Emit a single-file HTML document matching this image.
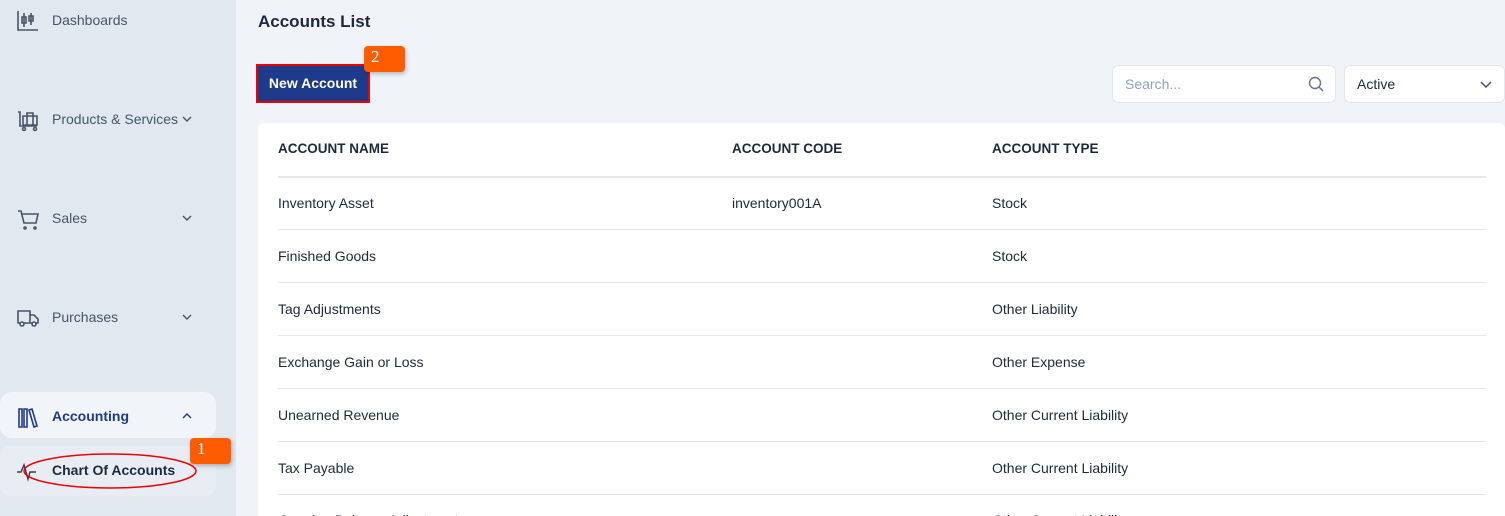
<!DOCTYPE html><html><head><style>
*{margin:0;padding:0;box-sizing:border-box}
html{overflow:hidden;width:1505px;height:516px}
body{width:1505px;height:516px;overflow:hidden;background:#f0f3f8;font-family:"Liberation Sans",sans-serif;position:relative;color:#1e293b}
.sb{position:absolute;left:0;top:0;width:236px;height:516px;background:#e2e8f0}
.it{position:absolute;left:0;width:216px;height:46px;font-size:14px;color:#475569}
.it svg.ic{position:absolute;left:17px;top:13px}
.it .t{position:absolute;left:52px;top:14px}
.it svg.chev{position:absolute;left:182px;top:19px}
.abs{position:absolute}
.th{position:absolute;top:141px;font-size:13.5px;font-weight:bold;color:#1e293b}
.td{position:absolute;font-size:14px;color:#1e293b}
.ln{position:absolute;left:278px;width:1208px;height:1px;background:#e5e7eb}
.badge{position:absolute;background:#ff5c00;color:#fff;font-family:"Liberation Serif",serif;font-size:17px;border-radius:4px;box-shadow:1px 2px 4px rgba(0,0,0,.25);padding-left:7px;line-height:22px}
</style></head><body>
<div class="sb">
<div class="it" style="top:-2px"><svg class="ic" width="22" height="20" viewBox="0 0 22 20" fill="none" stroke="#475569" stroke-width="1.6"><path d="M1 0v19h20M7 2v14M5 6h4v6H5zM14 2v12M12 5h4v5h-4z"/></svg><span class="t">Dashboards</span></div>
<div class="it" style="top:97px"><svg class="ic" width="22" height="22" viewBox="0 0 22 22" fill="none" stroke="#475569" stroke-width="1.6"><path d="M1 2h2v14h17M6 6h14v9H6zM10 6V3h6v3M10 6v9M16 6v9"/><circle cx="7" cy="19" r="1.5"/><circle cx="18" cy="19" r="1.5"/></svg><span class="t">Products &amp; Services</span><svg class="chev" width="10" height="6" viewBox="0 0 10 6" fill="none" stroke="#475569" stroke-width="1.4"><path d="M1 1l4 4 4-4"/></svg></div>
<div class="it" style="top:196px"><svg class="ic" width="22" height="22" viewBox="0 0 22 22" fill="none" stroke="#475569" stroke-width="1.6"><path d="M1 2h3l3 12h12l2-9H5"/><circle cx="8" cy="19" r="1"/><circle cx="18" cy="19" r="1"/></svg><span class="t">Sales</span><svg class="chev" width="10" height="6" viewBox="0 0 10 6" fill="none" stroke="#475569" stroke-width="1.4"><path d="M1 1l4 4 4-4"/></svg></div>
<div class="it" style="top:295px"><svg class="ic" width="22" height="20" viewBox="0 0 22 20" fill="none" stroke="#475569" stroke-width="1.6"><path d="M1 3h12v12H1zM13 7h4l4 4v4h-8"/><circle cx="5" cy="16" r="2" fill="#e2e8f0"/><circle cx="17" cy="16" r="2" fill="#e2e8f0"/></svg><span class="t">Purchases</span><svg class="chev" width="10" height="6" viewBox="0 0 10 6" fill="none" stroke="#475569" stroke-width="1.4"><path d="M1 1l4 4 4-4"/></svg></div>
<div class="abs" style="left:0;top:392px;width:216px;height:46px;background:#f1f5f9;border-radius:12px"></div>
<div class="it" style="top:394px;color:#1e3a8a;font-weight:bold"><svg class="ic" width="22" height="22" viewBox="0 0 22 22" fill="none" stroke="#1e3a8a" stroke-width="1.6"><path d="M2 2h3v18H2zM7 2h3v18H7zM12 3l3-1 5 17-3 1z"/></svg><span class="t">Accounting</span><svg class="chev" width="10" height="6" viewBox="0 0 10 6" fill="none" stroke="#1e3a8a" stroke-width="1.4"><path d="M1 5l4-4 4 4"/></svg></div>
<div class="abs" style="left:0;top:446px;width:216px;height:50px;background:#e8edf3;border-radius:10px"></div>
<div class="it" style="top:448px;color:#1e293b;font-weight:bold"><svg class="ic" width="22" height="22" viewBox="0 0 22 22" fill="none" stroke="#334155" stroke-width="1.5"><path d="M0 11h4l3-7 4 14 2-7h6"/></svg><span class="t">Chart Of Accounts</span></div>
<svg class="abs" style="left:22px;top:452px" width="180" height="40"><ellipse cx="88" cy="19" rx="86" ry="17" fill="none" stroke="#e00" stroke-width="1.5"/></svg>
</div>
<div class="badge" style="left:190px;top:438px;width:41px;height:26px">1</div>
<div class="abs" style="left:258px;top:12px;font-size:17px;font-weight:bold;color:#1e293b">Accounts List</div>
<div class="abs" style="left:256px;top:64px;width:114px;height:39px;background:#1e3a8a;border:2px solid #e00;color:#fff;font-size:14px;font-weight:bold;line-height:35px;text-align:center">New Account</div>
<div class="badge" style="left:364px;top:46px;width:41px;height:26px">2</div>
<div class="abs" style="left:1112px;top:65px;width:224px;height:38px;background:#fff;border:1px solid #e2e8f0;border-radius:6px;font-size:14px;color:#94a3b8;padding:10px 12px">Search...</div>
<svg class="abs" style="left:1308px;top:76px" width="16" height="16" fill="none" stroke="#64748b" stroke-width="1.4"><circle cx="7" cy="7" r="5.5"/><path d="M11 11l4 4"/></svg>
<div class="abs" style="left:1344px;top:65px;width:161px;height:38px;background:#fff;border:1px solid #e2e8f0;border-radius:6px;font-size:14px;color:#1e293b;padding:10px 12px">Active</div>
<svg class="abs" style="left:1480px;top:81px" width="12" height="7" fill="none" stroke="#475569" stroke-width="1.5"><path d="M1 1l5 5 5-5"/></svg>
<div class="abs" style="left:258px;top:123px;width:1247px;height:393px;background:#fff;border-radius:6px 6px 0 0"></div>
<div class="th" style="left:278px">ACCOUNT NAME</div><div class="th" style="left:732px">ACCOUNT CODE</div><div class="th" style="left:992px">ACCOUNT TYPE</div>
<div class="ln" style="top:176px;height:2px"></div>
<div class="td" style="left:278px;top:195px">Inventory Asset</div><div class="td" style="left:732px;top:195px">inventory001A</div><div class="td" style="left:992px;top:195px">Stock</div>
<div class="ln" style="top:229px"></div>
<div class="td" style="left:278px;top:248px">Finished Goods</div><div class="td" style="left:992px;top:248px">Stock</div>
<div class="ln" style="top:282px"></div>
<div class="td" style="left:278px;top:301px">Tag Adjustments</div><div class="td" style="left:992px;top:301px">Other Liability</div>
<div class="ln" style="top:335px"></div>
<div class="td" style="left:278px;top:354px">Exchange Gain or Loss</div><div class="td" style="left:992px;top:354px">Other Expense</div>
<div class="ln" style="top:388px"></div>
<div class="td" style="left:278px;top:407px">Unearned Revenue</div><div class="td" style="left:992px;top:407px">Other Current Liability</div>
<div class="ln" style="top:441px"></div>
<div class="td" style="left:278px;top:460px">Tax Payable</div><div class="td" style="left:992px;top:460px">Other Current Liability</div>
<div class="ln" style="top:494px"></div>
<div class="td" style="left:278px;top:512px">Opening Balance Adjustments</div><div class="td" style="left:992px;top:512px">Other Current Liability</div>
</body></html>
